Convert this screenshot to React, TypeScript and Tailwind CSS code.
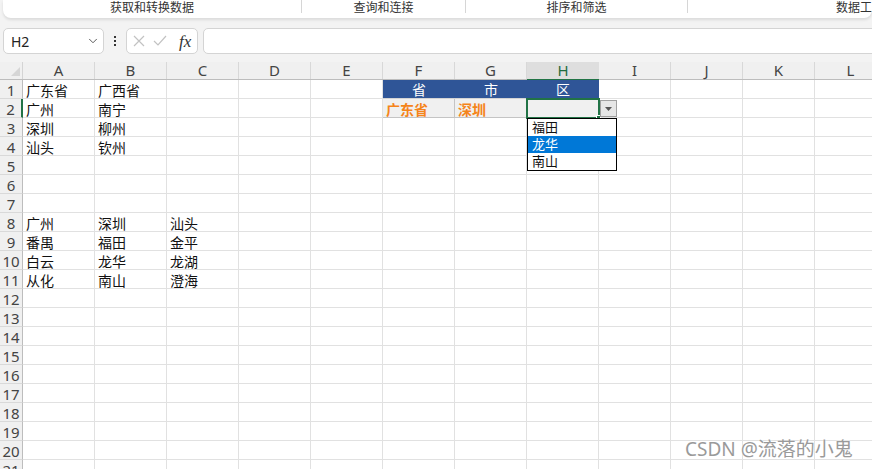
import { ChevronDown } from "lucide-react";

const COLS = ["A", "B", "C", "D", "E", "F", "G", "H", "I", "J", "K", "L"];
const ROWS = Array.from({ length: 21 }, (_, i) => i + 1);

const cells: Record<string, string> = {
    A1: "广东省", B1: "广西省",
    A2: "广州", B2: "南宁",
    A3: "深圳", B3: "柳州",
    A4: "汕头", B4: "钦州",
    A8: "广州", B8: "深圳", C8: "汕头",
    A9: "番禺", B9: "福田", C9: "金平",
    A10: "白云", B10: "龙华", C10: "龙湖",
    A11: "从化", B11: "南山", C11: "澄海",
};

const headerCells: Record<string, string> = { F1: "省", G1: "市", H1: "区" };
const inputCells: Record<string, string> = { F2: "广东省", G2: "深圳", H2: "" };

const Cell = ({ col, row }: { col: string; row: number }) => {
    const key = col + row;
    if (key in headerCells) {
        return (
            <div className="w-[72px] h-[19px] shrink-0 bg-[#2f5597] border-b border-[#d4d4d4] text-white text-center text-[14px] leading-[15px] pt-[2px]">
                {headerCells[key]}
            </div>
        );
    }
    if (key in inputCells) {
        return (
            <div className="w-[72px] h-[19px] shrink-0 bg-[#f0f0f0] border-r border-b border-[#c4c4c4] px-[3px] text-[14px] leading-[15px] pt-[3px] font-bold text-[#f5841a]">
                {inputCells[key]}
            </div>
        );
    }
    return (
        <div className="w-[72px] h-[19px] shrink-0 border-r border-b border-[#e1e1e1] px-[3px] text-[14px] leading-[15px] pt-[3px] text-[#111] whitespace-nowrap">
            {cells[key] ?? ""}
        </div>
    );
};

const Sep = () => <div className="w-px h-[13px] shrink-0 bg-[#d6d6d6]" />;

export default function App() {
    return (
        <div className="relative w-[872px] h-[469px] overflow-hidden bg-[#f3f3f3] font-['Noto_Sans','Noto_Sans_CJK_SC',sans-serif]">
            {/* Ribbon group labels */}
            <div className="ml-[3px] h-[18px] bg-white rounded-b-[8px] shadow-[0_2px_3px_rgba(0,0,0,0.10)] flex text-[12px] leading-[14px] text-[#333] overflow-hidden">
                <div className="w-[298px] shrink-0 text-center pt-[1px]">获取和转换数据</div>
                <Sep />
                <div className="w-[163px] shrink-0 text-center pt-[1px]">查询和连接</div>
                <Sep />
                <div className="w-[221px] shrink-0 text-center pt-[1px]">排序和筛选</div>
                <Sep />
                <div className="w-[300px] shrink-0 pl-[148px] pt-[1px] whitespace-nowrap">数据工具</div>
            </div>

            {/* Formula bar */}
            <div className="mt-[10px] h-[26px] flex items-stretch">
                <div className="ml-[3px] w-[101px] shrink-0 bg-white border border-[#d4d4d4] rounded-[5px] flex items-center justify-between pl-[7px] pr-[3px]">
                    <span className="text-[14px] text-[#222]">H2</span>
                    <ChevronDown size={14} strokeWidth={1.5} className="text-[#444]" />
                </div>
                <div className="w-[22px] shrink-0 flex flex-col items-center justify-center gap-[2px]">
                    <span className="w-[2px] h-[2px] bg-[#333]" />
                    <span className="w-[2px] h-[2px] bg-[#333]" />
                    <span className="w-[2px] h-[2px] bg-[#333]" />
                </div>
                <div className="w-[72px] shrink-0 bg-white border border-[#d4d4d4] rounded-[5px] flex items-center pl-[6px] gap-[8px]">
                    <svg width="12" height="12" viewBox="0 0 12 12" className="text-[#c2c2c2]">
                        <path d="M1 1 L11 11 M11 1 L1 11" stroke="currentColor" strokeWidth="1.2" fill="none" />
                    </svg>
                    <svg width="14" height="12" viewBox="0 0 14 12" className="text-[#c2c2c2]">
                        <path d="M1 6 L5 10 L13 1" stroke="currentColor" strokeWidth="1.2" fill="none" />
                    </svg>
                    <span className="ml-[4px] font-['Liberation_Serif',serif] italic text-[17px] text-[#333] leading-none">fx</span>
                </div>
                <div className="ml-[5px] w-[700px] shrink-0 bg-white border border-[#d4d4d4] rounded-[5px]" />
            </div>

            {/* Sheet */}
            <div className="mt-[8px] bg-white relative">
                {/* Column headers */}
                <div className="flex h-[18px] bg-[#f0f0f0] border-b border-[#bdbdbd]">
                    <div className="w-[23px] shrink-0 border-r border-[#d4d4d4] relative">
                        <svg width="9" height="9" viewBox="0 0 9 9" className="absolute right-[2px] bottom-[3px]">
                            <path d="M9 0 L9 9 L0 9 Z" fill="#d6d6d6" />
                        </svg>
                    </div>
                    {COLS.map(c => (
                        <div
                            key={c}
                            className={
                                c === "H"
                                    ? "w-[72px] h-[19px] shrink-0 bg-[#dedede] border-b-2 border-[#217346] text-center text-[15px] leading-[16px] text-[#1f6b40]"
                                    : "w-[72px] h-[17px] shrink-0 border-r border-[#d8d8d8] text-center text-[15px] leading-[16px] text-[#444]"
                            }
                        >
                            {c}
                        </div>
                    ))}
                </div>

                {ROWS.map(r => (
                    <div key={r} className="flex">
                        <div
                            className={
                                r === 2
                                    ? "w-[23px] h-[19px] shrink-0 bg-[#f0f0f0] border-r-2 border-r-[#217346] border-b border-b-[#d9d9d9] text-center text-[15px] leading-[16px] pt-[2px] text-[#444]"
                                    : "w-[23px] h-[19px] shrink-0 bg-[#f0f0f0] border-r border-r-[#bdbdbd] border-b border-b-[#d9d9d9] text-center text-[15px] leading-[16px] pt-[2px] text-[#444]"
                            }
                        >
                            {r}
                        </div>
                        {COLS.map(c => (
                            <Cell key={c} col={c} row={r} />
                        ))}
                    </div>
                ))}

                {/* Selection around H2 */}
                <div className="absolute left-[526px] top-[36px] w-[74px] h-[21px] border-2 border-[#217346]" />
                <div className="absolute left-[596px] top-[53px] w-[5px] h-[5px] bg-[#217346] border border-white" />

                {/* Data validation button */}
                <div className="absolute left-[600px] top-[38px] w-[17px] h-[17px] bg-[#e6e6e6] border border-[#a0a0a0] flex items-center justify-center">
                    <svg width="7" height="4" viewBox="0 0 7 4">
                        <path d="M0 0 L7 0 L3.5 4 Z" fill="#555" />
                    </svg>
                </div>

                {/* Dropdown list */}
                <div className="absolute left-[527px] top-[56px] w-[90px] bg-white border border-black text-[13px] leading-[17px]">
                    <div className="h-[17px] px-[4px] text-[#111]">福田</div>
                    <div className="h-[17px] px-[4px] bg-[#0078d7] text-white">龙华</div>
                    <div className="h-[17px] px-[4px] text-[#111]">南山</div>
                </div>
            </div>

            {/* Watermark */}
            <div className="absolute left-[685px] top-[437px] text-[19px] leading-[24px] text-[#9a9a9a] whitespace-nowrap [text-shadow:0_0_2px_#ffffff]">
                CSDN @流落的小鬼
            </div>
        </div>
    );
}
